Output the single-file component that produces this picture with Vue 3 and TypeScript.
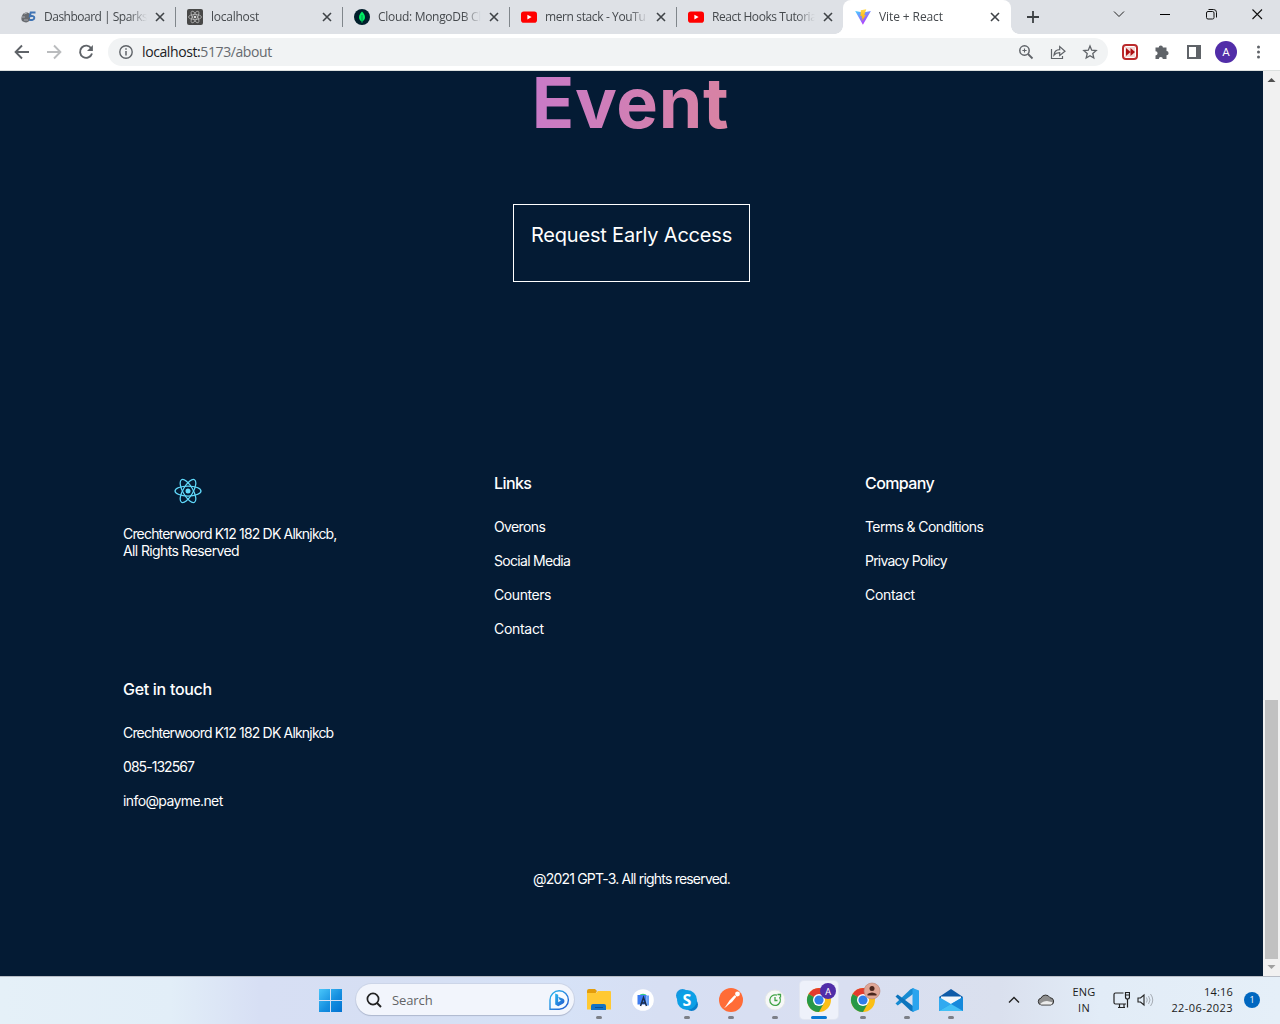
<script setup lang="ts">
interface Tab { title: string; icon: string; active?: boolean }

const tabs: Tab[] = [
  { title: 'Dashboard | Sparks', icon: 'sparks' },
  { title: 'localhost', icon: 'react' },
  { title: 'Cloud: MongoDB Cl', icon: 'mongo' },
  { title: 'mern stack - YouTu', icon: 'youtube' },
  { title: 'React Hooks Tutoria', icon: 'youtube' },
  { title: 'Vite + React', icon: 'vite', active: true },
]

const columns = [
  { name: 'links', title: 'Links', items: ['Overons', 'Social Media', 'Counters', 'Contact'] },
  { name: 'company', title: 'Company', items: ['Terms & Conditions', 'Privacy Policy', 'Contact'] },
  { name: 'touch', title: 'Get in touch', items: ['Crechterwoord K12 182 DK Alknjkcb', '085-132567', 'info@payme.net'] },
]

const apps = ['explorer', 'studio', 'skype', 'postman', 'timer', 'chrome', 'chrome2', 'vscode', 'mail']
</script>

<template>
  <div class="screen">
    <header class="tabstrip">
      <div v-for="(tab, i) in tabs" :key="tab.title" class="tab" :class="{ active: tab.active, first: i === 0, last: i === 4 }">
        <svg class="favicon" width="16" height="16" viewBox="0 0 16 16">
          <g v-if="tab.icon === 'sparks'">
            <path d="M2 5c2-2 5-2 7 0v6c-2 3-5 3-8 1-1-2-1-4 1-7z" fill="#686b70" />
            <path d="M1 8h3M3 5l3-1M3 11h4" stroke="#a9acb0" stroke-width="1" />
            <path d="M14.500 3.600H9.700L8.900 7.300c2-.7 4.600-.4 4.400 1.700-.2 2-2.600 2.400-5 1.700" fill="none" stroke="#3f73b3" stroke-width="2" />
          </g>
          <g v-else-if="tab.icon === 'react'">
            <rect width="16" height="16" rx="2" fill="#484848" />
            <g fill="none" stroke="#c3c3c3" stroke-width=".7">
              <ellipse cx="8" cy="8" rx="6.500" ry="2.500" />
              <ellipse cx="8" cy="8" rx="6.500" ry="2.500" transform="rotate(60 8 8)" />
              <ellipse cx="8" cy="8" rx="6.500" ry="2.500" transform="rotate(120 8 8)" />
            </g>
            <circle cx="8" cy="8" r="1.300" fill="#d8d8d8" />
          </g>
          <g v-else-if="tab.icon === 'mongo'">
            <circle cx="8" cy="8" r="8" fill="#001e2b" />
            <path d="M8 2.500c2 2.200 3 3.600 3 5.700 0 2-1.200 3.500-2.600 4.300L8.200 14h-.4l-.2-1.500C6.200 11.700 5 10.200 5 8.200c0-2.100 1-3.500 3-5.700z" fill="#00ed64" />
            <path d="M8 6v7" stroke="#00804a" stroke-width=".8" />
          </g>
          <g v-else-if="tab.icon === 'youtube'">
            <rect y="2.500" width="16" height="11.200" rx="2.800" fill="#f00" />
            <path d="M6.400 5.700v4.800L10.600 8.100z" fill="#fff" />
          </g>
          <g v-else>
            <defs>
              <linearGradient id="vt" x1="0" y1="0" x2=".6" y2="1"><stop stop-color="#41d1ff" /><stop offset="1" stop-color="#bd34fe" /></linearGradient>
              <linearGradient id="vb" x1="0" y1="0" x2="0" y2="1"><stop stop-color="#ffd94a" /><stop offset="1" stop-color="#ffa800" /></linearGradient>
            </defs>
            <path d="M.2 2l7.700 13.800L15.900 2 8 3.400z" fill="url(#vt)" />
            <path d="M11.300.2L5.800 1.300l-.4 6 1.600-.3-.5 2.300 1.100-.3-.7 3.300L10.800 6l-1.700.3z" fill="url(#vb)" />
          </g>
        </svg>
        <span class="tab-title" :class="'t' + i">{{ tab.title }}</span>
        <svg class="close" width="10" height="10" viewBox="0 0 10 10"><path d="M1 1l8 8M9 1L1 9" stroke="#3f4347" stroke-width="1.600" /></svg>
      </div>
      <svg class="newtab" width="14" height="14" viewBox="0 0 14 14"><path d="M7 1v12M1 7h12" stroke="#3c4043" stroke-width="1.800" /></svg>
      <div class="window-controls">
        <svg width="46" height="30" viewBox="0 0 46 30"><path d="M18 11.500l5 5 5-5" fill="none" stroke="#222" /></svg>
        <svg width="46" height="30" viewBox="0 0 46 30"><path d="M18 14.500h10" stroke="#000" /></svg>
        <svg width="46" height="30" viewBox="0 0 46 30"><g fill="none" stroke="#111"><rect x="18.500" y="11.500" width="7.500" height="7.500" rx="1.500" /><path d="M20.500 9.500h5a3 3 0 0 1 3 3v5" /></g></svg>
        <svg width="46" height="30" viewBox="0 0 46 30"><path d="M18.500 9.500l9.500 9.500M28 9.500L18.500 19" stroke="#111" stroke-width="1.100" /></svg>
      </div>
    </header>

    <nav class="toolbar">
      <svg width="108" height="36" viewBox="0 0 108 36" fill="none" stroke-width="1.900">
        <path d="M29 18H16M22 11.500L15.600 18l6.400 6.500" stroke="#5f6368" />
        <path d="M47 18h13M54 11.500l6.400 6.500-6.400 6.500" stroke="#babcbe" />
        <path d="M91.300 14.400A6.100 6.100 0 1 0 92 19.500" stroke="#5f6368" />
        <path d="M92.900 11v5.900H87z" fill="#5f6368" />
      </svg>
      <div class="omnibox">
        <svg class="info" width="16" height="16" viewBox="0 0 16 16"><circle cx="8" cy="8" r="6.200" fill="none" stroke="#5f6368" stroke-width="1.400" /><path d="M8 7v4.500M8 4.200v1.600" stroke="#5f6368" stroke-width="1.500" /></svg>
        <span class="url"><b>localhost:</b>5173/about</span>
        <div class="omni-icons">
          <svg width="16" height="16" viewBox="0 0 16 16" fill="none" stroke="#5f6368"><circle cx="6.500" cy="6.500" r="4.700" stroke-width="1.500" /><path d="M10 10l4.500 4.500" stroke-width="1.800" /><path d="M6.500 4.400v4.200M4.400 6.500h4.200" stroke-width="1.100" /></svg>
          <svg width="16" height="16" viewBox="0 0 16 16" fill="none" stroke="#5f6368" stroke-width="1.200"><path d="M1.500 5v9.500h11V12M4 11c.4-3.600 2.300-5.200 5.700-5.300V2.600L15 7.200l-5.300 4.300V8.700C7 8.700 5.400 9.300 4 11z" /></svg>
          <svg width="16" height="16" viewBox="0 0 16 16" fill="none" stroke="#5f6368" stroke-width="1.300"><path d="M8 2l1.700 4.200 4.500.4-3.400 3 1 4.400L8 11.700 4.200 14l1-4.400-3.400-3 4.500-.4z" /></svg>
        </div>
      </div>
      <svg class="extensions" width="172" height="36" viewBox="0 0 172 36">
        <rect x="15" y="11" width="14" height="14" rx="3" fill="#fff" stroke="#bb2a2c" stroke-width="2" />
        <rect x="17" y="13" width="10" height="10" fill="#f4d9d7" />
        <path d="M18 14l4.500 4-4.500 4zM22.500 14l4.500 4-4.500 4z" fill="#ae1014" />
        <path d="M47.500 13.500h3.200a2.100 2.100 0 1 1 4.200 0h3.600v3.600a2.100 2.100 0 1 1 0 4.200V25h-3.700a2 2 0 0 0-4 0h-3.300v-3.600a2.100 2.100 0 1 0 0-4.200z" fill="#5f6368" />
        <rect x="80" y="12" width="12" height="12" fill="none" stroke="#5f6368" stroke-width="2" /><rect x="88" y="11" width="5" height="14" fill="#5f6368" />
        <circle cx="118" cy="18" r="11" fill="#512da8" />
        <text x="118" y="22" text-anchor="middle" fill="#fff" font-size="11.500" font-family="Roboto, sans-serif">A</text>
        <g fill="#5f6368"><circle cx="150.500" cy="13" r="1.500" /><circle cx="150.500" cy="18" r="1.500" /><circle cx="150.500" cy="23" r="1.500" /></g>
      </svg>
    </nav>

    <div class="viewport">
      <main class="page">
        <h1>Event</h1>
        <button class="request">Request Early Access</button>
        <footer class="footer">
          <div class="brand">
            <svg width="28" height="26" viewBox="0 0 28 26" fill="none" stroke="#61dafb" stroke-width="1.250">
              <ellipse cx="14" cy="13" rx="13" ry="5" />
              <ellipse cx="14" cy="13" rx="13" ry="5" transform="rotate(60 14 13)" />
              <ellipse cx="14" cy="13" rx="13" ry="5" transform="rotate(120 14 13)" />
              <circle cx="14" cy="13" r="2.500" fill="#61dafb" stroke="none" />
            </svg>
            <p>Crechterwoord K12 182 DK Alknjkcb,<br><span class="rights">All Rights Reserved</span></p>
          </div>
          <div v-for="col in columns" :key="col.title" class="column" :class="col.name">
            <h4>{{ col.title }}</h4>
            <p v-for="(item, n) in col.items" :key="item" :class="'i' + n">{{ item }}</p>
          </div>
        </footer>
        <p class="copyright">@2021 GPT-3. All rights reserved.</p>
      </main>
      <aside class="scrollbar">
        <svg width="17" height="17" viewBox="0 0 17 17"><path d="M4.500 11L8.500 7l4 4z" fill="#505050" /></svg>
        <div class="thumb"></div>
        <svg width="17" height="17" viewBox="0 0 17 17"><path d="M4.500 6l4 4 4-4z" fill="#a0a0a0" /></svg>
      </aside>
    </div>

    <div class="taskbar">
      <svg class="start" width="24" height="24" viewBox="0 0 24 24">
        <defs>
          <linearGradient id="win" x1="0" y1="0" x2="24" y2="24" gradientUnits="userSpaceOnUse"><stop stop-color="#4cc9fb" /><stop offset=".55" stop-color="#158fe0" /><stop offset="1" stop-color="#0070d0" /></linearGradient>
        </defs>
        <path d="M0 1h11v11H0zM12 1h11v11H12zM0 13h11v11H0zM12 13h11v11H12z" fill="url(#win)" />
      </svg>
      <div class="search">
        <svg width="16" height="16" viewBox="0 0 16 16" fill="none" stroke="#222" stroke-width="1.700"><circle cx="7" cy="7" r="5.600" /><path d="M11 11l4 4" stroke-width="2" /></svg>
        <span>Search</span>
        <svg class="bing" width="22" height="22" viewBox="0 0 22 22">
          <defs><linearGradient id="bg" x1="0" y1="0" x2="1" y2="1"><stop stop-color="#28b8ef" /><stop offset="1" stop-color="#2458cf" /></linearGradient></defs>
          <path d="M2 20.300V11a9.200 9.200 0 1 1 9.200 9.200z" fill="#f6fbff" stroke="url(#bg)" stroke-width="1.400" />
          <path d="M7.200 4.500l3 1.200v7.500l2.800-1.600-1.500-.8-1.300-3 5 1.900c1.700.8 1.700 3.800 0 4.800L10.200 17.300l-3-1.900z" fill="url(#bg)" />
        </svg>
      </div>
      <div class="apps">
        <div v-for="app in apps" :key="app" class="app" :class="app">
          <svg width="38" height="38" viewBox="0 0 38 38">
            <g v-if="app === 'explorer'">
              <path d="M7 10a2 2 0 0 1 2-2h6l2 2-2 3H7z" fill="#e39d0b" />
              <path d="M7 12h9l2-2h12a1 1 0 0 1 1 1v17.500H7z" fill="#ffc933" />
              <path d="M11 29v-4a2 2 0 0 1 2-2h11a2 2 0 0 1 2 2v4z" fill="#1173c4" />
              <path d="M15 26.500h8" stroke="#0a4f91" />
            </g>
            <g v-else-if="app === 'studio'">
              <circle cx="19" cy="19" r="10.800" fill="#fff" />
              <path d="M15 14.500a4.500 3 0 0 1 8 0z" fill="#37cf85" /><path d="M13.500 14h9v9.500h-9z" fill="#3d7cf0" /><path d="M22.500 14.500h2.500v10h-2.500z" fill="#6ba4f8" />
              <path d="M16.500 25l3-8.500 3 8.500M17.500 22h4" stroke="#1c2d49" stroke-width="1.500" fill="none" />
            </g>
            <g v-else-if="app === 'skype'">
              <circle cx="14.500" cy="14.500" r="6.500" fill="#1597e0" /><circle cx="23.500" cy="23.500" r="6.500" fill="#087dcb" /><circle cx="19" cy="19" r="10" fill="#0c9fe6" />
              <text x="19" y="24.500" text-anchor="middle" font-family="Open Sans, sans-serif" font-weight="700" font-size="16" fill="#fff">S</text>
            </g>
            <g v-else-if="app === 'postman'">
              <circle cx="19" cy="19" r="12" fill="#ff6c37" />
              <circle cx="25.500" cy="13" r="2.400" fill="#fff" /><path d="M24.500 15.500L20 21l-6.500 4.500 4-6 5-5.300z" fill="#fff" /><path d="M13 26.500l5-5" stroke="#fff" />
            </g>
            <g v-else-if="app === 'timer'">
              <circle cx="19" cy="19" r="10" fill="#f6f8f7" stroke="#e3e6e8" />
              <path d="M23.500 16.200a5.300 5.300 0 1 1-2.500-2M19 16v3.500h2.500M21.500 13.500h3v3" fill="none" stroke="#42a447" stroke-width="1.300" />
            </g>
            <g v-else-if="app === 'chrome' || app === 'chrome2'">
              <circle cx="19" cy="19" r="12" fill="#fbbf15" />
              <path d="M19 19L8.600 13A12 12 0 0 1 29.400 13z" fill="#e33b2e" />
              <path d="M19 19L8.600 13A12 12 0 0 0 19 31l5-9z" fill="#279847" />
              <circle cx="19" cy="19" r="6" fill="#fff" /><circle cx="19" cy="19" r="4.600" fill="#2f7de9" />
              <g v-if="app === 'chrome'">
                <circle cx="28" cy="10" r="8" fill="#512da8" />
                <text x="28" y="13.500" text-anchor="middle" font-family="Roboto, sans-serif" font-size="9.500" fill="#fff">A</text>
              </g>
              <g v-else>
                <circle cx="28" cy="10" r="8" fill="#dfa696" stroke="#b98273" stroke-width=".6" /><circle cx="28" cy="7.500" r="2.500" fill="#4a261d" /><path d="M23.500 14.500v-1.500q4.500-3 9 0v1.500z" fill="#4a261d" />
              </g>
            </g>
            <g v-else-if="app === 'vscode'">
              <path d="M25.500 7l-3 1.200L7.500 22.500l2.200 2 16-12z" fill="#168bd2" />
              <path d="M25.500 31l-3-1.200L7.500 15.500l2.200-2 16 12z" fill="#0c74bd" />
              <path d="M24.500 7l6.500 2.500v19L24.500 31z" fill="#29a4ee" />
            </g>
            <g v-else>
              <path d="M7 16L19 8l12 8v2H7z" fill="#0e5ba8" />
              <path d="M9 15.500h20v8H9z" fill="#f2f6fb" />
              <path d="M7 16l12 7 12-7v14H7z" fill="#31aaf0" /><path d="M7 30l24-14v14z" fill="#1689db" /><path d="M7 30l12-7 12 7z" fill="#43c0f6" />
            </g>
          </svg>
          <i v-if="app !== 'studio'" class="mark"></i>
        </div>
      </div>
      <div class="tray">
        <svg class="chevron" width="12" height="8" viewBox="0 0 12 8"><path d="M1 6.500l5-5 5 5" fill="none" stroke="#222" stroke-width="1.400" /></svg>
        <svg class="cloud" width="18" height="14" viewBox="0 0 18 14"><path d="M4.500 12a3.500 3.500 0 0 1-.5-6.900 5 5 0 0 1 9-.4 3.700 3.700 0 0 1 .8 7.300z" fill="#8e8e8e" stroke="#333" /><path d="M3 11.300Q6 8 10 8l5.500 1.200-1 2.300H4z" fill="#ececec" /></svg>
        <div class="lang">ENG<br>IN</div>
        <svg class="net" width="17" height="18" viewBox="0 0 17 18" fill="none" stroke="#222" stroke-width="1.200"><path d="M10.500 2H2.500a1.500 1.500 0 0 0-1.500 1.500v8A1.500 1.500 0 0 0 2.500 13H13M5 16.500h7M6.500 13v3.500M11 13v3.500M14.500 8v8.500M12.500 1.500h4v4.500a2 2 0 0 1-4 0zM12.500 4h4" /></svg>
        <svg class="sound" width="17" height="14" viewBox="0 0 17 14" fill="none"><path d="M1 5v4h2.500L7 12V2L3.500 5z" stroke="#222" stroke-width="1.100" /><path d="M9.500 4.500q1.500 2.500 0 5M11.500 3q3 4 0 8M13.500 1q4.500 6 0 12" stroke="#a5abb3" /></svg>
        <div class="clock"><span class="time">14:16</span><br><span class="date">22-06-2023</span></div>
        <div class="badge">1</div>
      </div>
    </div>
  </div>
</template>

<style>
body { margin: 0; overflow: hidden; }
</style>

<style scoped>
* { box-sizing: border-box; }
svg { display: block; flex: none; }
.screen { width: 1280px; height: 1024px; display: flex; flex-direction: column; overflow: hidden; font-family: "Open Sans", "Noto Sans", sans-serif; }
.tabstrip { height: 34px; background: #dee1e6; display: flex; align-items: flex-start; padding-left: 9px; flex: none; }
.tab { width: 167px; height: 34px; display: flex; align-items: center; padding-left: 11px; position: relative; }
.tab.first { padding-left: 12px; }
.tab.first .tab-title { margin-left: 7px; }
.tab:not(.active):not(.last)::after { content: ""; position: absolute; right: 0; top: 7px; width: 1px; height: 20px; background: #80868b; }
.tab-title { width: 103px; margin-left: 8px; font-size: 12px; line-height: 16px; letter-spacing: -.25px; color: #45494d; white-space: nowrap; overflow: hidden; -webkit-mask-image: linear-gradient(90deg, #000 82%, transparent 100%); mask-image: linear-gradient(90deg, #000 82%, transparent 100%); }
.close { margin-left: 8px; }
.tab.active { background: #fff; border-radius: 8px 8px 0 0; width: 168px; margin-left: -1px; padding-left: 12px; }
.t0 { letter-spacing: -.5px; }
.t2 { letter-spacing: -.3px; }
.t3 { letter-spacing: -.38px; }
.t4 { letter-spacing: -.42px; }
.t5 { letter-spacing: -.1px; }
.tab.active::before, .tab.active::after { content: ""; position: absolute; bottom: 0; width: 8px; height: 8px; }
.tab.active::before { left: -8px; background: radial-gradient(circle at 0 0, #dee1e6 7.500px, #fff 8px); }
.tab.active::after { right: -8px; background: radial-gradient(circle at 100% 0, #dee1e6 7.500px, #fff 8px); }
.newtab { margin: 10px 0 0 15px; }
.window-controls { margin-left: auto; display: flex; }
.toolbar { height: 37px; background: #fff; border-bottom: 1px solid #dce0df; display: flex; flex: none; }
.omnibox { width: 1000px; height: 28px; margin-top: 4px; border-radius: 14px; background: #f1f3f4; display: flex; align-items: center; padding: 0 10px; }
.url { margin-left: 8px; font-size: 14px; line-height: 20px; letter-spacing: -.4px; color: #666a6f; }
.url b { font-weight: 400; color: #202124; }
.omni-icons { margin-left: auto; display: flex; gap: 16px; }
.viewport { flex: 1; display: flex; min-height: 0; }
.page { width: 1263px; background: #041b34; color: #fff; font-family: Inter, "Open Sans", sans-serif; display: flex; flex-direction: column; align-items: center; overflow: hidden; }
.page p, .page h1, .page h4 { margin: 0; }
.page h1 { margin-top: -10px; font-size: 70px; line-height: 84px; font-weight: 700; letter-spacing: .7px; margin-right: 2px; color: transparent; background: linear-gradient(100deg, #c87ac9, #d983a1); background-clip: text; -webkit-background-clip: text; }
.request { width: 237px; height: 78px; margin-top: 59px; padding: 0 0 17px; flex: none; border: 1px solid #fff; background: transparent; color: #fff; font: 400 20px Inter, sans-serif; letter-spacing: -.2px; white-space: nowrap; }
.footer { width: 1113px; margin: 191px 0 0 123px; height: 344px; display: grid; grid-template-columns: repeat(3, 371px); grid-template-rows: 206px 138px; align-self: flex-start; flex: none; }
.brand svg { margin: 5px 0 0 51px; }
.brand p { margin-top: 21px; }
.footer p, .copyright { font-size: 14px; line-height: 17px; letter-spacing: -.5px; white-space: nowrap; }
.footer .brand p, .touch .i0 { letter-spacing: -.82px; }
.rights { letter-spacing: -.62px; }
.links .i0 { letter-spacing: -.62px; }
.links .i1 { letter-spacing: -.7px; }
.links .i2 { letter-spacing: -.42px; }
.links .i3, .company .i2 { letter-spacing: -.3px; }
.company .i0 { letter-spacing: -.6px; }
.company .i1 { letter-spacing: -.78px; }
.footer .touch .i0 { letter-spacing: -.82px; }
.touch .i1 { letter-spacing: -.95px; }
.touch .i2 { letter-spacing: -.6px; }
.column h4 { font-size: 16px; line-height: 20px; font-weight: 500; letter-spacing: -.3px; margin-bottom: 25px; }
.links h4, .company h4 { letter-spacing: -.6px; }
.column p { margin-bottom: 17px; }
.page .copyright { margin-top: 53px; letter-spacing: -.8px; }
.scrollbar { width: 17px; background: #f1f1f1; display: flex; flex-direction: column; align-items: center; }
.thumb { width: 13px; height: 259px; margin-top: auto; background: #c1c1c1; }
.taskbar { height: 48px; flex: none; border-top: 1px solid #b8bdc6; padding-bottom: 2px; display: flex; align-items: center; background: linear-gradient(90deg, #e5f0f8 0, #e2eef8 170px, #d7dff4 260px, #d6dff3 390px, #d6e2f7 560px, #d7dff3 660px, #d9dff1 850px, #dae0ee 1000px, #e2ecf7 1100px, #e5eff8 100%); }
.start { margin-left: 319px; }
.search { width: 218px; height: 31px; margin-left: 13px; border-radius: 16px; background: #f2f5fc; box-shadow: 0 1px 1px #aeb8cf, 0 0 0 1px #ccd5e8; display: flex; align-items: center; padding: 0 4px 0 10px; font-size: 13px; color: #626466; }
.search span { margin-left: 10px; letter-spacing: -.1px; }
.bing { margin-left: auto; }
.apps { display: flex; margin-left: 6px; gap: 6px; }
.app { width: 38px; height: 38px; position: relative; border-radius: 4px; }
.app.chrome { background: #eef1fa; box-shadow: 0 0 0 1px #e2e6f1; }
.mark { position: absolute; left: 16px; top: 35px; width: 6px; height: 3px; border-radius: 2px; background: #7c7f87; }
.chrome .mark { left: 11px; width: 16px; background: #0878d4; }
.tray { display: flex; align-items: center; margin-left: 38px; font-size: 11px; line-height: 16px; color: #1b1b1b; }
.cloud { margin-left: 17px; }
.lang { width: 28px; margin-left: 15px; text-align: center; letter-spacing: .2px; }
.net { margin-left: 15px; }
.sound { margin-left: 7px; }
.clock { width: 64px; margin-left: 15px; text-align: right; white-space: nowrap; }
.time { letter-spacing: .2px; }
.date { letter-spacing: .42px; }
.badge { width: 16px; height: 16px; margin-left: 11px; border-radius: 50%; background: #0067c0; color: #fff; text-align: center; font-size: 9px; }
</style>
